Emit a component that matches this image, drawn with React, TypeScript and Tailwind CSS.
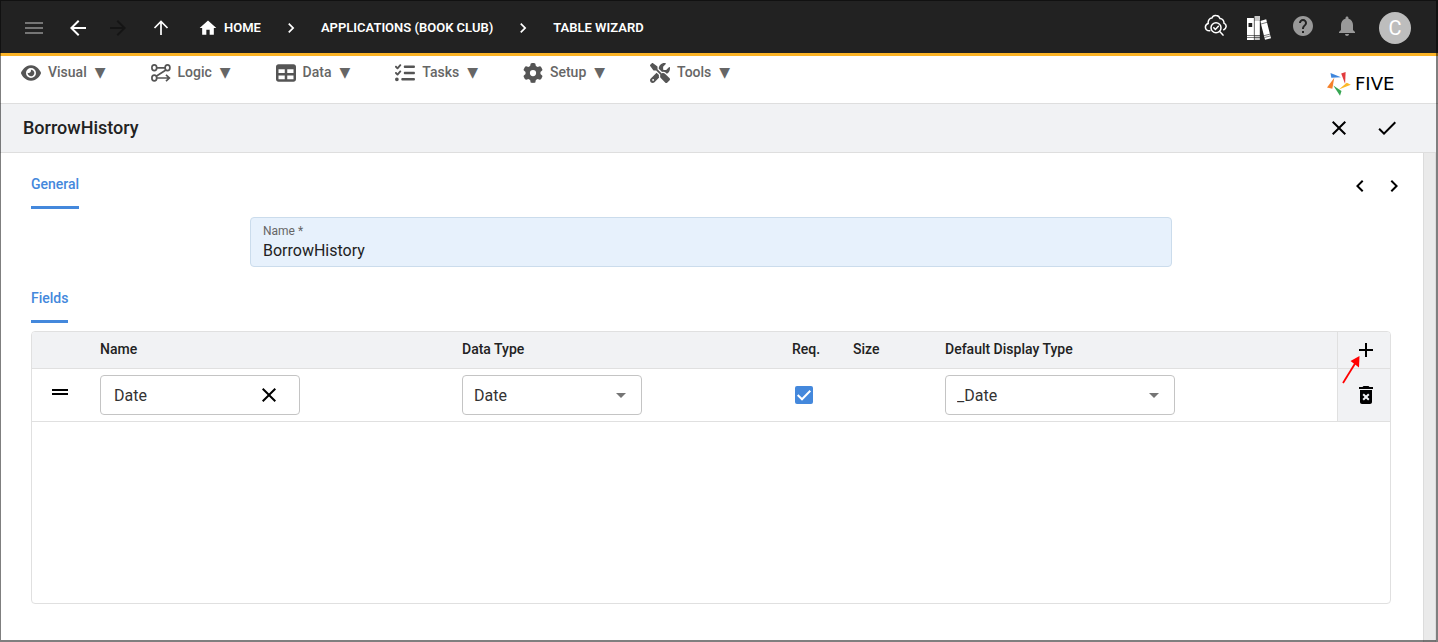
import React from "react";
import {
  MdAdd,
  MdArrowBack,
  MdArrowDropDown,
  MdArrowForward,
  MdCheck,
  MdChevronLeft,
  MdChevronRight,
  MdClose,
  MdDeleteForever,
  MdDragHandle,
  MdHelp,
  MdHome,
  MdMenu,
  MdNotifications,
} from "react-icons/md";
import { FaEye, FaGear, FaListCheck, FaScrewdriverWrench, FaTable } from "react-icons/fa6";

const LogicIcon = ({ className }: { className?: string }) => (
  <svg viewBox="0 0 20 18" fill="none" stroke="currentColor" strokeWidth="1.7" className={className}>
    <ellipse cx="3.3" cy="3.8" rx="2.4" ry="2.9" />
    <ellipse cx="16.5" cy="3.8" rx="2.4" ry="2.9" />
    <ellipse cx="3.3" cy="14" rx="2.4" ry="2.9" />
    <path d="M5.7 3.8h8.4M14.9 6 5.2 12.2M5.7 14h12.6M15 10.8l3.4 3.2-3.4 3.2" />
  </svg>
);

const CloudSearchIcon = () => (
  <svg viewBox="0 0 24 24" fill="none" stroke="currentColor" strokeWidth="1.5" strokeLinecap="round" className="size-6">
    <path d="M6.800 16.800C3.800 16.900 2.300 15.100 2.400 12.900c.2-1.900 1.400-3 2.800-3.400C4.800 6.300 6.700 4.100 8.900 4c.8-2 2.600-2.800 4.300-2.500 2 .2 3.300 1.500 3.800 3.100 2.400.1 4.200 2 3.900 4.500 1.600.6 2.400 2 2.200 3.600-.2 1.500-1 2.600-2.300 3.100" />
    <circle cx="13" cy="13.800" r="5" />
    <path d="m10.800 13.700 1.600 1.700 3-3.100M16.700 17.600l3.300 3.500" />
  </svg>
);

const LibraryIcon = () => (
  <svg viewBox="0 0 24 24" className="size-6">
    <path fill="#fff" d="M0 2h7.500v22H0z" />
    <path fill="#c9c9c9" d="M7.500 0h5.500v24H7.500z" />
    <path fill="#fff" d="M7.500 5h5.500v14H7.500zM13.200 5l6-1.800L24 22.200l-6 1.600z" />
    <path fill="#222" d="M1.500 7h3.700v4H1.500z" />
    <path stroke="#222" strokeWidth=".6" fill="none" d="M7.300 2v22M0 19.500h13M0 21.500h13M14 8l6-1.700M17 19.700l6-1.600M17.500 21.500l6-1.600M13.200 4v20" />
  </svg>
);

const FiveMark = () => (
  <svg viewBox="0 0 24 24" className="size-6">
    <path fill="#3f86dc" d="m3.500 1 10.500 4.200L4.300 5.800z" />
    <path fill="#e23b3e" d="m14.200 1.500 4.400-1.500-.5 12z" />
    <path fill="#fbb829" d="m23.800 12.800-12 4.800 8-6.800z" />
    <path fill="#37a653" d="m6.300 13.600 8.200 5.500-1.500 4.700z" />
    <path fill="#f5812a" d="M7.300 5.800 5.300 16.800 0 15.500z" />
  </svg>
);

const menu = [
  { label: "Visual", icon: FaEye },
  { label: "Logic", icon: LogicIcon },
  { label: "Data", icon: FaTable },
  { label: "Tasks", icon: FaListCheck },
  { label: "Setup", icon: FaGear },
  { label: "Tools", icon: FaScrewdriverWrench },
];

const TopBar = () => (
  <header className="flex h-14 items-center justify-between border-b-3 border-[#fbb325] bg-[#222] pt-[3px] pr-[27px] pl-[22px] text-white">
    <div className="flex items-center">
      <button aria-label="Menu" className="text-[#757575]"><MdMenu className="size-6" /></button>
      <button aria-label="Back" className="ml-5"><MdArrowBack className="size-6" /></button>
      <button aria-label="Forward" className="ml-4 text-[#151515]" disabled><MdArrowForward className="size-6" /></button>
      <button aria-label="Up" className="ml-[19px]">
        <svg viewBox="0 0 24 24" fill="none" stroke="currentColor" strokeWidth="1.700" className="size-6">
          <path d="M12 19V6M5.500 12 12 5.500l6.500 6.500" />
        </svg>
      </button>
      <nav aria-label="Breadcrumb" className="ml-[25px] flex items-center text-[13px] font-semibold">
        <a href="#home" className="flex items-center gap-1.5"><MdHome className="size-5" />HOME</a>
        <MdChevronRight className="mx-5 size-5" />
        <a href="#applications">APPLICATIONS (BOOK CLUB)</a>
        <MdChevronRight className="mx-5 size-5" />
        <a href="#table-wizard">TABLE WIZARD</a>
      </nav>
    </div>
    <div className="flex items-center gap-5">
      <button aria-label="Inspect" className="pb-1"><CloudSearchIcon /></button>
      <button aria-label="Library"><LibraryIcon /></button>
      <button aria-label="Help" className="pb-1 text-[#999]"><MdHelp className="size-6" /></button>
      <button aria-label="Notifications" className="pb-1 text-[#999]"><MdNotifications className="size-6" /></button>
      <button className="size-8 rounded-full bg-[#bdbdbd] text-xl">C</button>
    </div>
  </header>
);

const MenuBar = () => (
  <div className="flex h-12 items-start justify-between border-b border-[#dedede] bg-white pr-[23px] pl-[21px]">
    <nav className="flex gap-[45px] pt-1.5 text-sm font-medium text-[#666]">
      {menu.map(({ label, icon: Icon }) => (
        <button key={label} className="flex h-5 items-center leading-5">
          <Icon className="mt-0.5 mr-[7px] size-5 text-[#555]" />
          {label}
          <span className="ml-2 font-['DejaVu_Sans'] leading-5">▼</span>
        </button>
      ))}
    </nav>
    <a href="#five" className="flex items-center gap-1 pt-4 text-black">
      <FiveMark />
      <span className="w-[60px] font-['DejaVu_Sans'] text-lg leading-6">FIVE</span>
    </a>
  </div>
);

const SectionTab = ({ children }: { children: React.ReactNode }) => (
  <h2 className="w-fit rounded-t-xs border-b-3 border-[#4488dc] pb-3 text-sm leading-5 font-medium text-[#4488dc]">{children}</h2>
);

const SelectBox = ({ label, value, className }: { label: string; value: string; className: string }) => (
  <div className={`relative ${className}`}>
    <select
      aria-label={label}
      defaultValue={value}
      className="h-10 w-full appearance-none rounded border border-[#c4c4c4] bg-white pt-px pl-[11px] text-base text-[#333]"
    >
      <option>{value}</option>
    </select>
    <MdArrowDropDown className="pointer-events-none absolute top-2 right-[9px] size-6 text-[#757575]" />
  </div>
);

const FieldsTable = () => (
  <div className="min-h-[273px] overflow-hidden rounded border border-[#e0e0e0]">
    <table className="w-full table-fixed border-separate border-spacing-0 text-left">
      <colgroup>
        <col className="w-[68px]" />
        <col className="w-[362px]" />
        <col className="w-[330px]" />
        <col className="w-[61px]" />
        <col className="w-[92px]" />
        <col />
        <col className="w-[53px]" />
      </colgroup>
      <thead className="bg-[#f1f2f4] text-sm leading-5 text-[#222]">
        <tr className="h-[37px] *:border-b *:border-[#e0e0e0] *:p-0 *:pb-0.5 *:font-medium">
          <th />
          <th>Name</th>
          <th>Data Type</th>
          <th>Req.</th>
          <th>Size</th>
          <th>Default Display Type</th>
          <th className="relative border-l">
            <button aria-label="Add field" className="mx-auto block pt-0.5 pl-1 text-black"><MdAdd className="size-6" /></button>
            {/* pointer to the add button */}
            <svg viewBox="0 0 18 28" className="absolute top-6 left-1 z-10 h-7 w-[18px] overflow-visible">
              <path d="M1 27 14 6" stroke="#f00" strokeWidth="1.800" />
              <path d="m17.500 0-9 5 8.500 6.500z" fill="#f00" />
            </svg>
          </th>
        </tr>
      </thead>
      <tbody>
        <tr className="h-[53px] *:border-b *:border-[#e0e0e0] *:p-0">
          <td>
            <button aria-label="Reorder" className="ml-4 block pb-1.5"><MdDragHandle className="size-6" /></button>
          </td>
          <td>
            <div className="flex h-10 w-[200px] items-center rounded border border-[#c4c4c4] bg-white pr-[18px] pl-[13px]">
              <input aria-label="Name" defaultValue="Date" className="w-full min-w-0 pt-0.5 text-base text-[#333] outline-none" />
              <button aria-label="Clear"><MdClose className="size-6" /></button>
            </div>
          </td>
          <td><SelectBox label="Data type" value="Date" className="w-[180px]" /></td>
          <td>
            <label className="relative ml-[3px] block size-[18px]">
              <input type="checkbox" aria-label="Required" defaultChecked className="block size-[18px] appearance-none rounded-xs bg-[#4488dc]" />
              <svg viewBox="0 0 18 18" fill="none" stroke="#fff" strokeWidth="2" className="pointer-events-none absolute inset-0">
                <path d="m2.700 9 4.300 4.300 8.300-8.500" />
              </svg>
            </label>
          </td>
          <td />
          <td><SelectBox label="Default display type" value="_Date" className="w-[230px]" /></td>
          <td className="border-l bg-[#f1f2f4]">
            <button aria-label="Delete field" className="mx-auto block pl-1"><MdDeleteForever className="size-6" /></button>
          </td>
        </tr>
      </tbody>
    </table>
  </div>
);

const App = () => {
  return (
    <div className="flex min-h-screen flex-col bg-white font-[Roboto,sans-serif] text-black">
      <TopBar />
      <MenuBar />
      <div className="mr-[2px] flex h-[49px] items-center justify-between border-b border-[#dedede] bg-[#f1f2f4] pr-[37px] pl-[23px]">
        <h1 className="text-lg font-medium text-[#222]">BorrowHistory</h1>
        <div className="flex gap-6">
          <button aria-label="Cancel"><MdClose className="size-6" /></button>
          <button aria-label="Save"><MdCheck className="size-6" /></button>
        </div>
      </div>

      <div className="mr-[2px] flex grow">
        <main className="min-w-0 grow pt-[21px] pr-8 pb-9 pl-[31px]">
          <div className="flex items-start justify-between">
            <SectionTab>General</SectionTab>
            <div className="-mr-[15px] flex gap-2.5">
              <button aria-label="Previous"><MdChevronLeft className="size-6" /></button>
              <button aria-label="Next"><MdChevronRight className="size-6" /></button>
            </div>
          </div>
          <div className="mx-auto mt-2 mb-[21px] flex h-[50px] w-full max-w-[922px] flex-col rounded border border-[#cbdcec] bg-[#e7f1fc] px-3 pt-1.5">
            <label htmlFor="table-name" className="text-xs leading-[14px] text-[#666]">Name *</label>
            <input id="table-name" defaultValue="BorrowHistory" className="bg-transparent pt-px text-base text-[#222] outline-none" />
          </div>
          <SectionTab>Fields</SectionTab>
          <div className="mt-2">
            <FieldsTable />
          </div>
        </main>
        <div className="w-[13px] shrink-0 border-x border-[#dcdcdc] bg-[#eaeaea]" />
      </div>

      {/* window frame, drawn over the whole page */}
      <div className="pointer-events-none fixed inset-0 border-t border-r-2 border-b-2 border-l border-black/50" />
    </div>
  );
};

export default App;
